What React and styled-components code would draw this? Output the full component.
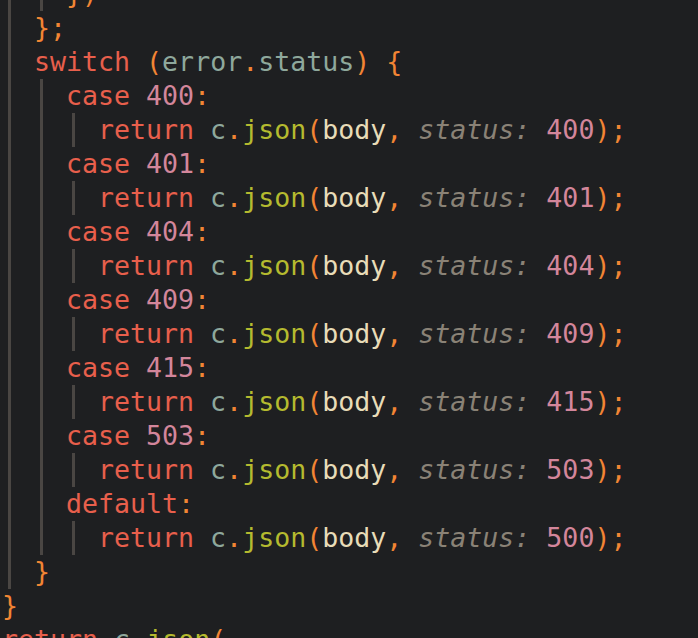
import React from "react";
import styled, { createGlobalStyle } from "styled-components";

const GlobalStyle = createGlobalStyle`
  html, body {
    margin: 0;
    padding: 0;
    background: #1e1f21;
    overflow: hidden;
  }
`;

const Editor = styled.div`
  width: 698px;
  height: 638px;
  overflow: hidden;
  background: #1e1f21;
`;

const Code = styled.div`
  margin-top: -23px;
  padding-left: 2px;
  font-family: "DejaVu Sans Mono", "Liberation Mono", monospace;
  font-size: 26.6px;
  color: #e8dcb8;
`;

const Line = styled.div`
  display: flex;
  height: 34px;
  line-height: 34px;
`;

const Text = styled.span`
  white-space: pre;
`;

const Indent = styled.span`
  display: flex;
  width: 32px;
  height: 100%;
  flex-shrink: 0;
  padding-left: 6px;
  box-sizing: border-box;
`;

const Guide = styled.span`
  width: 3px;
  height: 100%;
  background: #4a4643;
`;

const colors = {
  kw: "#e85f4c",
  num: "#d3869b",
  punc: "#f28534",
  var: "#8ea89c",
  fn: "#b5ba2f",
  arg: "#e8dcb8",
};

const Tok = styled.span`
  color: ${({ $k }) => colors[$k]};
`;

const Hint = styled.span`
  color: #8a8276;
  font-style: italic;
`;

const codes = ["400", "401", "404", "409", "415", "503"];

const Guides = ({ depth }) =>
  Array.from({ length: depth }, (_, i) => (
    <Indent key={i}>
      <Guide />
    </Indent>
  ));

const CodeLine = ({ depth = 0, children }) => (
  <Line>
    <Guides depth={depth} />
    <Text>{children}</Text>
  </Line>
);

const ReturnLine = ({ status }) => (
  <CodeLine depth={3}>
    <Tok $k="kw">return</Tok>{" "}
    <Tok $k="var">c</Tok>
    <Tok $k="punc">.</Tok>
    <Tok $k="fn">json</Tok>
    <Tok $k="punc">(</Tok>
    <Tok $k="arg">body</Tok>
    <Tok $k="punc">,</Tok>{" "}
    <Hint>status:</Hint>{" "}
    <Tok $k="num">{status}</Tok>
    <Tok $k="punc">);</Tok>
  </CodeLine>
);

export default function App() {
  return (
    <Editor>
      <GlobalStyle />
      <Code>
        <CodeLine depth={2}>
          <Tok $k="punc">{"})"}</Tok>
        </CodeLine>
        <CodeLine depth={1}>
          <Tok $k="punc">{"};"}</Tok>
        </CodeLine>
        <CodeLine depth={1}>
          <Tok $k="kw">switch</Tok>{" "}
          <Tok $k="punc">(</Tok>
          <Tok $k="var">error</Tok>
          <Tok $k="punc">.</Tok>
          <Tok $k="var">status</Tok>
          <Tok $k="punc">)</Tok>{" "}
          <Tok $k="punc">{"{"}</Tok>
        </CodeLine>
        {codes.map((code) => (
          <React.Fragment key={code}>
            <CodeLine depth={2}>
              <Tok $k="kw">case</Tok>{" "}
              <Tok $k="num">{code}</Tok>
              <Tok $k="punc">:</Tok>
            </CodeLine>
            <ReturnLine status={code} />
          </React.Fragment>
        ))}
        <CodeLine depth={2}>
          <Tok $k="kw">default</Tok>
          <Tok $k="punc">:</Tok>
        </CodeLine>
        <ReturnLine status="500" />
        <CodeLine depth={1}>
          <Tok $k="punc">{"}"}</Tok>
        </CodeLine>
        <CodeLine>
          <Tok $k="punc">{"}"}</Tok>
        </CodeLine>
        <CodeLine>
          <Tok $k="kw">return</Tok>{" "}
          <Tok $k="var">c</Tok>
          <Tok $k="punc">.</Tok>
          <Tok $k="fn">json</Tok>
          <Tok $k="punc">(</Tok>
        </CodeLine>
      </Code>
    </Editor>
  );
}
